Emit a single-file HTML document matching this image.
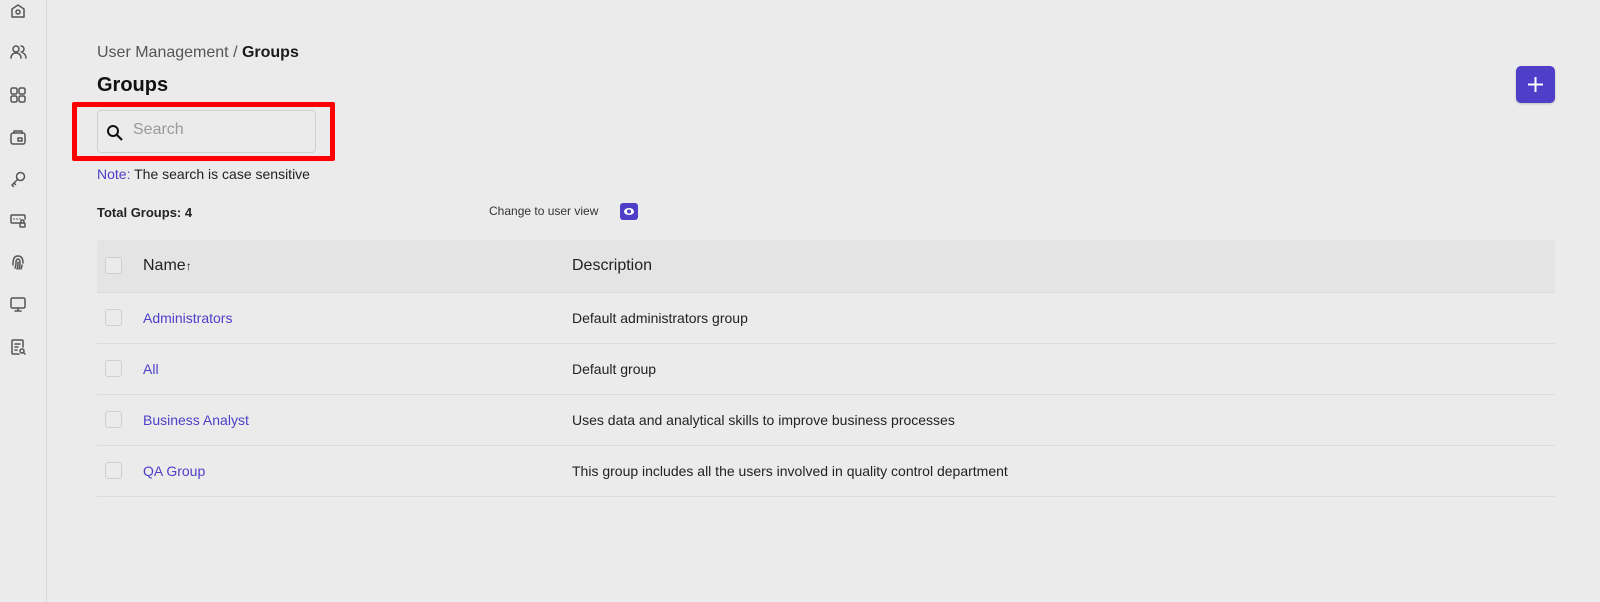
<!DOCTYPE html>
<html><head><meta charset="utf-8"><style>
*{margin:0;padding:0;box-sizing:border-box}
body{width:1600px;height:602px;background:#ebebeb;font-family:"Liberation Sans",sans-serif;color:#1a1a1a;position:relative;overflow:hidden}
.side{position:absolute;left:0;top:0;width:47px;height:602px;background:#ebebeb;border-right:1px solid #dadada}
.side svg{position:absolute;left:9px;width:18px;height:18px;fill:none;stroke:#555;stroke-width:1.5;stroke-linecap:round;stroke-linejoin:round}
.t{position:absolute;white-space:nowrap}
.search{position:absolute;left:97px;top:110px;width:219px;height:43px;border:1px solid #d0d0d0;border-radius:4px}
.red{position:absolute;left:72px;top:102px;width:263px;height:59px;border:5px solid #ff0000;border-radius:2px}
.tbl{position:absolute;left:97px;top:240px;width:1458px}
.row{height:51px;border-bottom:1px solid #dcdcdc;position:relative;font-size:14px}
.hdr{background:#e4e4e4;height:53px;border-radius:4px 4px 0 0;font-size:16px}
.cb{position:absolute;left:8px;top:50%;margin-top:-9px;width:17px;height:17px;border:1px solid #cfcfcf;border-radius:3px;background:#ebebeb}
.c1{position:absolute;left:46px;top:50%;transform:translateY(-50%);color:#4f3fc8}
.c2{position:absolute;left:475px;top:50%;transform:translateY(-50%);color:#222}
</style></head><body>
<div class="side">
<svg style="top:2px" viewBox="0 0 18 18"><path d="M3 7l6-4 6 4v8H3z"/><circle cx="9" cy="10" r="2"/></svg>
<svg style="top:43px" viewBox="0 0 18 18"><circle cx="7" cy="6" r="3"/><path d="M2 15c0-3 2-5 5-5s5 2 5 5M12 3a3 3 0 010 6M14 10c2 1 3 3 3 5"/></svg>
<svg style="top:86px" viewBox="0 0 18 18"><rect x="2" y="2" width="6" height="6" rx="1.5"/><rect x="10" y="2" width="6" height="6" rx="1.5"/><rect x="2" y="10" width="6" height="6" rx="1.5"/><rect x="10" y="10" width="6" height="6" rx="1.5"/></svg>
<svg style="top:128px" viewBox="0 0 18 18"><rect x="2" y="5" width="14" height="11" rx="2"/><path d="M5 5V3h8v2"/><rect x="9" y="10" width="4" height="3"/></svg>
<svg style="top:170px" viewBox="0 0 18 18"><circle cx="11.5" cy="6.5" r="4"/><path d="M8.5 9.5L3 15l1.5 1.5M5 13l1.5 1.5"/></svg>
<svg style="top:211px" viewBox="0 0 18 18"><path d="M11 12H3a1 1 0 01-1-1V5a1 1 0 011-1h12a1 1 0 011 1v3"/><path d="M5 8h.1M8 8h.1M11 8h.1"/><rect x="11" y="12" width="5" height="4" rx="1"/><path d="M12 12v-1.5a1.5 1.5 0 013 0V12"/></svg>
<svg style="top:253px" viewBox="0 0 18 18"><path d="M4 12c0-6 1-9 5-9s5 3 5 7M6 15c1-2 1-4 1-6s1-3 2-3 2 1 2 3-0 5-1 7M9 9c0 3 0 5-1 7M13 12c0 2-1 3-1 4"/></svg>
<svg style="top:295px" viewBox="0 0 18 18"><rect x="2" y="3" width="14" height="10" rx="1.5"/><path d="M9 13v3M6 16h6"/></svg>
<svg style="top:338px" viewBox="0 0 18 18"><path d="M10 16H4a1 1 0 01-1-1V3a1 1 0 011-1h9a1 1 0 011 1v6M6 6h5M6 9h3M6 12h2"/><circle cx="13" cy="13" r="2"/><path d="M14.5 14.5L16 16"/></svg>
</div>
<div class="t" style="left:97px;top:44px;font-size:16px;color:#555">User Management / <b style="color:#1a1a1a">Groups</b></div>
<div class="t" style="left:97px;top:74px;font-size:20px;font-weight:bold;color:#111">Groups</div>
<div class="search"></div>
<svg style="position:absolute;left:106px;top:124px" width="18" height="18" viewBox="0 0 18 18"><circle cx="7" cy="7" r="5" fill="none" stroke="#111" stroke-width="2"/><path d="M11 11l5 5" stroke="#111" stroke-width="2.2"/></svg>
<div class="t" style="left:133px;top:121px;font-size:16px;color:#9a9a9a">Search</div>
<div class="red"></div>
<div class="t" style="left:97px;top:166px;font-size:14px;color:#222"><span style="color:#4f3fc8">Note:</span> The search is case sensitive</div>
<div class="t" style="left:97px;top:205px;font-size:13px;font-weight:bold;color:#222">Total Groups: 4</div>
<div class="t" style="left:489px;top:204px;font-size:12px;color:#333">Change to user view</div>
<div style="position:absolute;left:620px;top:203px;width:18px;height:17px;background:#4f3fc8;border-radius:3px"><svg width="18" height="17" viewBox="0 0 18 17"><ellipse cx="9" cy="8.5" rx="5" ry="3.5" fill="#fff"/><circle cx="9" cy="8.5" r="2" fill="#4f3fc8"/></svg></div>
<div style="position:absolute;left:1516px;top:66px;width:39px;height:37px;background:#4f3fc8;border-radius:5px;box-shadow:0 1px 2px rgba(0,0,0,.2)"><svg width="39" height="37"><path d="M19.5 11v15M12 18.5h15" stroke="#fff" stroke-width="2"/></svg></div>
<div class="tbl">
<div class="row hdr"><div class="cb"></div><div class="c1" style="color:#222">Name<span style="font-size:12px">↑</span></div><div class="c2">Description</div></div>
<div class="row"><div class="cb"></div><div class="c1">Administrators</div><div class="c2">Default administrators group</div></div>
<div class="row"><div class="cb"></div><div class="c1">All</div><div class="c2">Default group</div></div>
<div class="row"><div class="cb"></div><div class="c1">Business Analyst</div><div class="c2">Uses data and analytical skills to improve business processes</div></div>
<div class="row"><div class="cb"></div><div class="c1">QA Group</div><div class="c2">This group includes all the users involved in quality control department</div></div>
</div>
</body></html>
